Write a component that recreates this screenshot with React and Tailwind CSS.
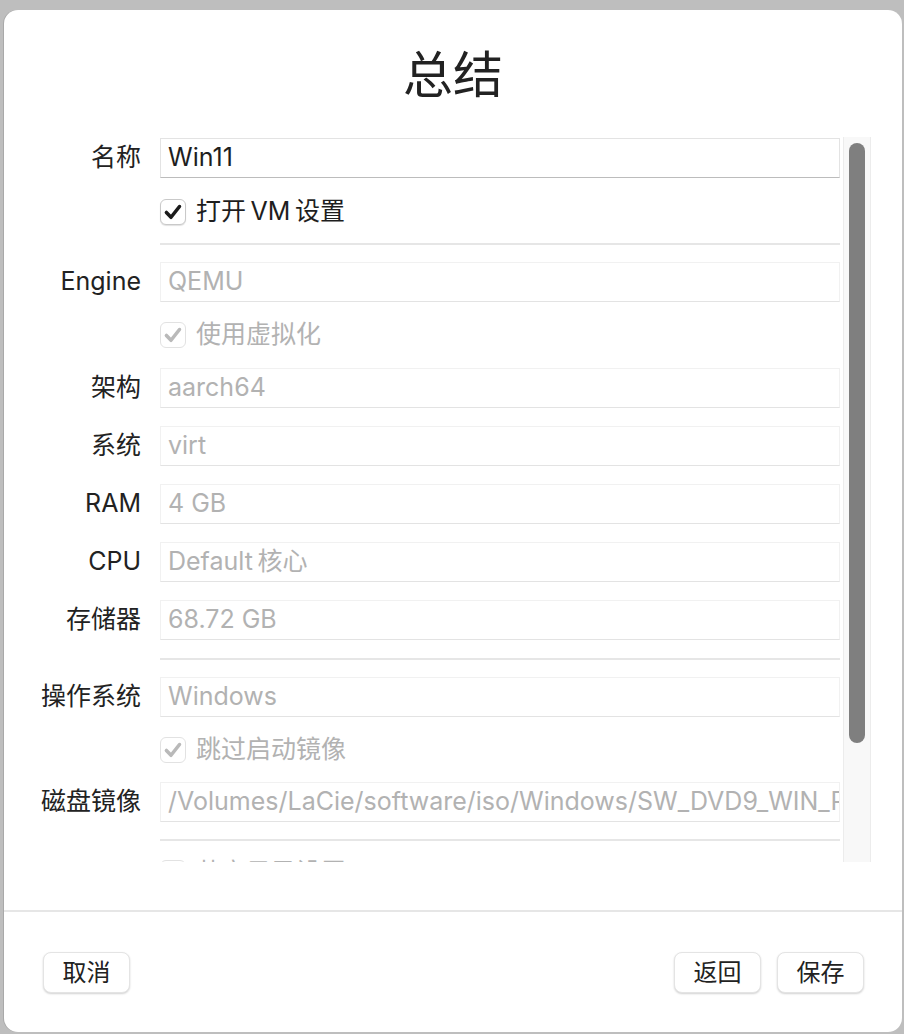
const font = { fontFamily: '"Inter", "Noto Sans CJK SC", sans-serif' }

function Check({ disabled = false }) {
  return (
    <span
      className={
        'flex h-[26px] w-[26px] shrink-0 items-center justify-center rounded-[6px] border bg-white ' +
        (disabled
          ? 'border-[#e2e2e2]'
          : 'border-[#c9c9c9] shadow-[0_1px_1px_rgba(0,0,0,0.12)]')
      }
    >
      <svg width="22" height="22" viewBox="0 0 20 20">
        <path
          d="M4 10.4 L8.2 14.8 L15.9 5"
          fill="none"
          stroke={disabled ? '#b9b9b9' : '#1b1b1b'}
          strokeWidth="3.2"
          strokeLinecap="round"
          strokeLinejoin="round"
        />
      </svg>
    </span>
  )
}

function FieldRow({ label, value, disabled = true, className = '' }) {
  return (
    <div className={'flex h-[40px] items-center ' + className}>
      <div className="w-[138px] shrink-0 pr-[1px] text-right text-[25px] text-[#222]">
        {label}
      </div>
      <div
        className={
          'ml-[18px] flex h-[40px] w-[680px] shrink-0 items-center overflow-hidden whitespace-nowrap border px-[7px] text-[25px] ' +
          (disabled
            ? 'border-[#f1f1f1] border-b-[#e3e3e3] text-[#b2b2b2]'
            : 'border-[#e3e3e3] border-b-[#bcbcbc] text-[#1e1e1e]')
        }
      >
        {value}
      </div>
    </div>
  )
}

function CheckRow({ label, disabled = true, className = '' }) {
  return (
    <div className={'flex h-[26px] items-center pl-[156px] ' + className}>
      <Check disabled={disabled} />
      <span
        className={
          'ml-[10px] whitespace-nowrap text-[25px] ' +
          (disabled ? 'text-[#b2b2b2]' : 'text-[#1e1e1e]')
        }
      >
        {label}
      </span>
    </div>
  )
}

function Separator({ className = '' }) {
  return <div className={'ml-[156px] h-[2px] w-[680px] bg-[#e6e6e6] ' + className} />
}

function Button({ children }) {
  return (
    <button
      type="button"
      className="flex h-[41px] w-[87px] items-center justify-center rounded-[8px] border border-[#e4e4e4] bg-white text-[24px] text-[#222] shadow-[0_1px_2px_rgba(0,0,0,0.18)]"
    >
      {children}
    </button>
  )
}

export default function App() {
  return (
    <div
      className="h-[1034px] w-[904px] bg-[#bebebe] pb-[2px] pl-[4px] pr-[2px] pt-[10px]"
      style={font}
    >
      <div className="flex h-full flex-col overflow-hidden rounded-[14px] bg-white shadow-[-1px_0_0_#a9a9a9]">
        <div className="mb-[33px] pt-[36px] text-center text-[50px] font-normal leading-[58px] text-[#222]">
          总结
        </div>

        <div className="flex h-[725px] shrink-0">
          <div className="w-[836px] shrink-0 overflow-hidden">
            <FieldRow className="mt-[1px]" label="名称" value="Win11" disabled={false} />
            <CheckRow className="mt-[21px]" label={'打开\u2009VM\u2009设置'} disabled={false} />
            <Separator className="mt-[18px]" />
            <FieldRow className="mt-[17px]" label="Engine" value="QEMU" />
            <CheckRow className="mt-[20px]" label="使用虚拟化" />
            <FieldRow className="mt-[20px]" label="架构" value="aarch64" />
            <FieldRow className="mt-[18px]" label="系统" value="virt" />
            <FieldRow className="mt-[18px]" label="RAM" value="4 GB" />
            <FieldRow className="mt-[18px]" label="CPU" value={'Default\u2009核心'} />
            <FieldRow className="mt-[18px]" label="存储器" value="68.72 GB" />
            <Separator className="mt-[18px]" />
            <FieldRow className="mt-[17px]" label="操作系统" value="Windows" />
            <CheckRow className="mt-[20px]" label="跳过启动镜像" />
            <FieldRow
              className="mt-[19px]"
              label="磁盘镜像"
              value="/Volumes/LaCie/software/iso/Windows/SW_DVD9_WIN_PRO_11_22H2_Arm64_ChnSimp.iso"
            />
            <Separator className="mt-[17px]" />
            <CheckRow className="mt-[19px]" label="共享目录设置" />
          </div>
          <div className="ml-[3px] flex h-full w-[28px] shrink-0 justify-center border-x border-[#ececec] bg-[#f8f8f8]">
            <div className="mt-[6px] h-[600px] w-[16px] rounded-full bg-[#7f7f7f]" />
          </div>
        </div>

        <div className="mt-[48px] h-[2px] bg-[#e6e6e6]" />

        <div className="mt-[40px] flex pl-[39px] pr-[38px]">
          <Button>取消</Button>
          <div className="ml-auto flex gap-[16px]">
            <Button>返回</Button>
            <Button>保存</Button>
          </div>
        </div>
      </div>
    </div>
  )
}
